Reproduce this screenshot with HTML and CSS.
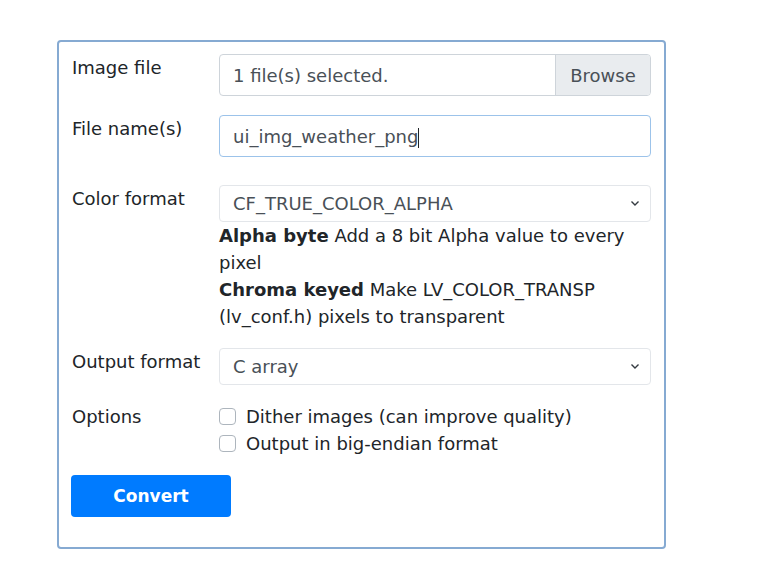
FILE: index.html
```html
<!DOCTYPE html>
<html>
<head>
<meta charset="utf-8">
<link rel="stylesheet" href="styles.css">
</head>
<body>
<div class="card">
  <div class="row r-file">
    <div class="label">Image file</div>
    <div class="field">
      <div class="file-input">
        <span class="file-text">1 file(s) selected.</span>
        <span class="browse">Browse</span>
      </div>
    </div>
  </div>
  <div class="row r-name">
    <div class="label">File name(s)</div>
    <div class="field">
      <div class="text-input focused">ui_img_weather_png<span class="caret"></span></div>
    </div>
  </div>
  <div class="row r-color">
    <div class="label">Color format</div>
    <div class="field">
      <div class="select">
        <span>CF_TRUE_COLOR_ALPHA</span>
        <svg class="chev" width="10" height="7" viewBox="0 0 10 7"><path d="M1.5 1.5 L5 5 L8.5 1.5" fill="none" stroke="#343a40" stroke-width="1.4"/></svg>
      </div>
      <div class="help">
        <p class="help-line"><b>Alpha byte</b> Add a 8 bit Alpha value to every pixel</p>
        <p class="help-line"><b>Chroma keyed</b> Make LV_COLOR_TRANSP (lv_conf.h) pixels to transparent</p>
      </div>
    </div>
  </div>
  <div class="row r-out">
    <div class="label">Output format</div>
    <div class="field">
      <div class="select">
        <span>C array</span>
        <svg class="chev" width="10" height="7" viewBox="0 0 10 7"><path d="M1.5 1.5 L5 5 L8.5 1.5" fill="none" stroke="#343a40" stroke-width="1.4"/></svg>
      </div>
    </div>
  </div>
  <div class="row r-opt">
    <div class="label">Options</div>
    <div class="field">
      <div class="check"><span class="box"></span>Dither images (can improve quality)</div>
      <div class="check"><span class="box"></span>Output in big-endian format</div>
    </div>
  </div>
  <div class="actions">
    <button class="btn">Convert</button>
  </div>
</div>
</body>
</html>
```

FILE: styles.css
```css
* { box-sizing: border-box; }
html, body { margin: 0; padding: 0; background: #fff; }
body {
  font-family: "DejaVu Sans", "Open Sans", sans-serif;
  font-size: 18px;
  line-height: 27px;
  color: #212529;
  padding: 40px 0 0 57px;
}
.card {
  width: 609px;
  height: 509px;
  border: 2px solid #86aad2;
  border-radius: 4px;
  padding: 12px 13px 0 13px;
}
.row { display: flex; }
.label { width: 147px; flex: none; }
.field { flex: 1; min-width: 0; }
.r-name { margin-top: 19px; }
.r-color { margin-top: 28px; }
.r-out { margin-top: 18px; }
.r-opt { margin-top: 18px; }
.file-input {
  display: flex;
  height: 42px;
  border: 1px solid #ced4da;
  border-radius: 4px;
  overflow: hidden;
  color: #495057;
}
.file-text { flex: 1; padding: 7px 13px; white-space: nowrap; }
.browse {
  width: 95px;
  flex: none;
  background: #e9ecef;
  border-left: 1px solid #ced4da;
  text-align: center;
  padding: 7px 0;
}
.text-input {
  height: 42px;
  border: 1px solid #ced4da;
  border-radius: 4px;
  padding: 7px 13px;
  color: #495057;
}
.text-input.focused { border-color: #9cc3ea; }
.caret {
  display: inline-block;
  width: 1px;
  height: 20px;
  background: #212529;
  vertical-align: -5px;
}
.select {
  height: 37px;
  border: 1px solid #e3e6ea;
  border-radius: 4px;
  padding: 4px 13px;
  display: flex;
  justify-content: space-between;
  align-items: center;
  color: #495057;
}
.chev { margin-right: -3px; }
.help { color: #212529; }
.help-line { margin: 0; }
.help b { font-weight: 700; }
.check { display: flex; align-items: center; }
.box {
  width: 17px;
  height: 17px;
  border: 1px solid #adb5bd;
  border-radius: 4px;
  margin-right: 10px;
  flex: none;
}
.actions { margin-top: 18px; }
.btn {
  width: 160px;
  height: 42px;
  margin-left: -1px;
  background: #007bff;
  color: #fff;
  border: none;
  border-radius: 4px;
  font-family: inherit;
  font-size: 17px;
  font-weight: 700;
}
```
